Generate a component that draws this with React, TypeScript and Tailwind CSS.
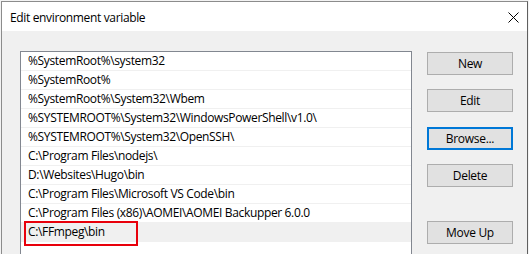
import React from "react";

const rows = [
  "%SystemRoot%\\system32",
  "%SystemRoot%",
  "%SystemRoot%\\System32\\Wbem",
  "%SYSTEMROOT%\\System32\\WindowsPowerShell\\v1.0\\",
  "%SYSTEMROOT%\\System32\\OpenSSH\\",
  "C:\\Program Files\\nodejs\\",
  "D:\\Websites\\Hugo\\bin",
  "C:\\Program Files\\Microsoft VS Code\\bin",
  "C:\\Program Files (x86)\\AOMEI\\AOMEI Backupper 6.0.0",
  "C:\\FFmpeg\\bin",
];

const font = { fontFamily: '"Open Sans", "Noto Sans", sans-serif' };

function Btn({ label, focused, className }: { label: string; focused?: boolean; className?: string }) {
  return (
    <div
      className={`w-[86px] h-[23px] flex items-center justify-center bg-[#e1e1e1] text-[12px] tracking-[-0.3px] text-black box-border ${
        focused ? "border-2 border-[#0078d7]" : "border border-[#adadad]"
      } ${className ?? ""}`}
    >
      {label}
    </div>
  );
}

export default function App() {
  return (
    <div className="w-[529px] h-[254px] overflow-hidden bg-[#f3f3f3] pl-[1px] pt-[1px]" style={font}>
      <div className="w-[527px] h-[300px] border border-[#8c8c8c] border-r-[#5f5f5f] bg-[#f0f0f0] flex flex-col">
        <div className="h-[29px] bg-white flex items-center justify-between shrink-0">
          <span className="pl-[8px] text-[12px] tracking-[-0.35px] text-black leading-none pt-[2px]">Edit environment variable</span>
          <svg width="11" height="11" viewBox="0 0 11 11" className="mr-[8px] mt-[1px]">
            <path d="M0.5 0.5 L10.5 10.5 M10.5 0.5 L0.5 10.5" stroke="#000" strokeWidth="1" />
          </svg>
        </div>
        <div className="flex pl-[18px] pt-[20px]">
          <div className="w-[392px] h-[260px] bg-white border border-[#828790]">
            {rows.map((r, i) => {
              const sel = i === rows.length - 1;
              return (
                <div
                  key={i}
                  className={`relative h-[19px] box-border border-b border-[#f0f0f0] flex items-center pl-[7px] text-[12px] tracking-[-0.35px] text-black whitespace-nowrap ${
                    sel ? "bg-[#f0f0f0]" : ""
                  }`}
                >
                  {r}
                  {sel && (
                    <div className="absolute left-[3px] top-[-2px] w-[114px] h-[25px] border-2 border-[#e8000b]" />
                  )}
                </div>
              );
            })}
          </div>
          <div className="ml-[15px] pt-[1px] flex flex-col">
            <Btn label="New" />
            <Btn label="Edit" className="mt-[14px]" />
            <Btn label="Browse..." focused className="mt-[15px]" />
            <Btn label="Delete" className="mt-[14px]" />
            <Btn label="Move Up" className="mt-[34px]" />
          </div>
        </div>
      </div>
    </div>
  );
}
